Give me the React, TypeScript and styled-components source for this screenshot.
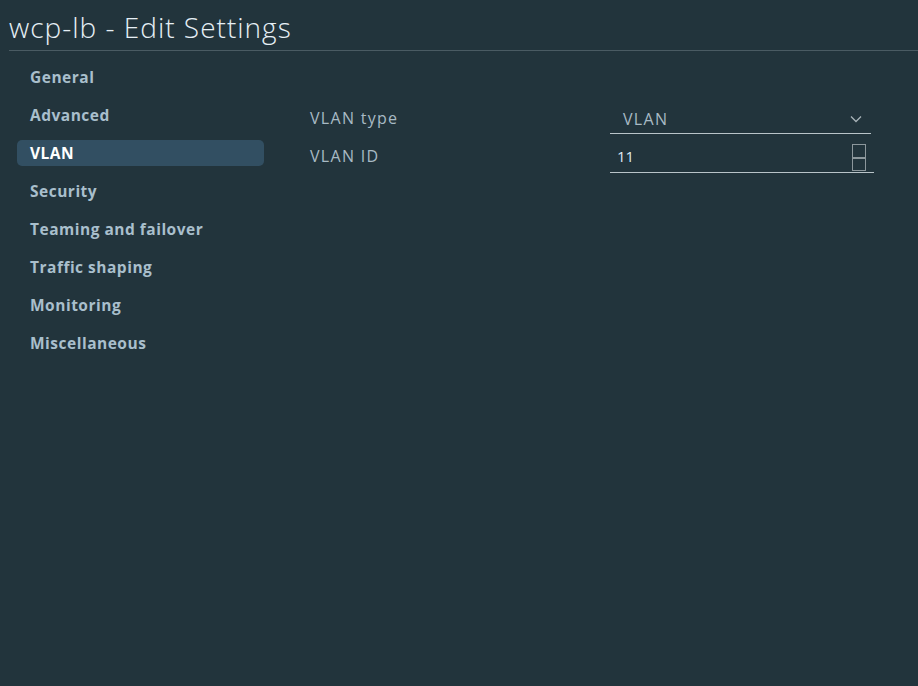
import React from "react";
import styled, { createGlobalStyle } from "styled-components";

const Global = createGlobalStyle`
  html, body { margin: 0; padding: 0; background: #22343c; }
  body { font-family: "Open Sans", "Lato", sans-serif; }
  #root { min-height: 686px; }
`;

const Page = styled.div`
  width: 918px;
  height: 686px;
  background: #22343c;
  display: flex;
  flex-direction: column;
  overflow: hidden;
`;

const Header = styled.div`
  margin-left: 9px;
  border-bottom: 1px solid #4a5b63;
  height: 51px;
  box-sizing: border-box;
  padding-top: 9px;
`;

const Title = styled.h1`
  margin: 0;
  font-weight: 300;
  font-size: 28px;
  line-height: 36px;
  letter-spacing: 1px;
  color: #e6eff5;
`;

const Body = styled.div`
  display: flex;
  padding-top: 13px;
`;

const Nav = styled.nav`
  width: 247px;
  margin-left: 17px;
  display: flex;
  flex-direction: column;
  gap: 12px;
`;

const NavItem = styled.div<{ $active?: boolean }>`
  height: 26px;
  line-height: 26px;
  padding-left: 13px;
  border-radius: 5px;
  font-size: 15.5px;
  font-weight: 700;
  letter-spacing: 0.5px;
  color: ${(p) => (p.$active ? "#ffffff" : "#a9bfcc")};
  background: ${(p) => (p.$active ? "#324f62" : "transparent")};
`;

const Form = styled.div`
  margin-left: 46px;
  padding-top: 41px;
  display: flex;
  flex-direction: column;
  gap: 9px;
`;

const Row = styled.div`
  display: flex;
  align-items: flex-start;
`;

const Label = styled.div`
  width: 300px;
  font-size: 16px;
  line-height: 26px;
  letter-spacing: 1.3px;
  color: #a8bac4;
`;

const Select = styled.div`
  width: 261px;
  height: 28px;
  border-bottom: 1px solid #b9c4c9;
  display: flex;
  align-items: center;
  justify-content: space-between;
`;

const SelectValue = styled.span`
  padding-left: 13px;
  font-size: 16px;
  letter-spacing: 1.3px;
  color: #a8bac4;
  line-height: 26px;
`;

const Chevron = styled.svg`
  width: 12px;
  height: 8px;
  margin-right: 9px;
`;

const NumberField = styled.div`
  width: 264px;
  height: 29px;
  border-bottom: 1px solid #b9c4c9;
  display: flex;
  align-items: flex-start;
  justify-content: space-between;
`;

const NumberValue = styled.span`
  padding-left: 7px;
  font-size: 15px;
  line-height: 26px;
  color: #dfeaf5;
`;

const Spinner = styled.div`
  width: 12px;
  height: 25px;
  margin-right: 8px;
  margin-top: 1px;
  border: 1px solid #8c979c;
  display: flex;
  flex-direction: column;
`;

const SpinHalf = styled.div<{ $top?: boolean }>`
  flex: 1;
  border-bottom: ${(p) => (p.$top ? "2px solid #8c979c" : "none")};
`;

const items = [
  "General",
  "Advanced",
  "VLAN",
  "Security",
  "Teaming and failover",
  "Traffic shaping",
  "Monitoring",
  "Miscellaneous",
];

export default function App() {
  return (
    <Page>
      <Global />
      <Header>
        <Title>wcp-lb - Edit Settings</Title>
      </Header>
      <Body>
        <Nav>
          {items.map((it) => (
            <NavItem key={it} $active={it === "VLAN"}>
              {it}
            </NavItem>
          ))}
        </Nav>
        <Form>
          <Row>
            <Label>VLAN type</Label>
            <Select>
              <SelectValue>VLAN</SelectValue>
              <Chevron viewBox="0 0 12 8">
                <path d="M1 1.5 L6 6.5 L11 1.5" fill="none" stroke="#a8b3b8" strokeWidth="1.3" />
              </Chevron>
            </Select>
          </Row>
          <Row>
            <Label>VLAN ID</Label>
            <NumberField>
              <NumberValue>11</NumberValue>
              <Spinner>
                <SpinHalf $top />
                <SpinHalf />
              </Spinner>
            </NumberField>
          </Row>
        </Form>
      </Body>
    </Page>
  );
}
